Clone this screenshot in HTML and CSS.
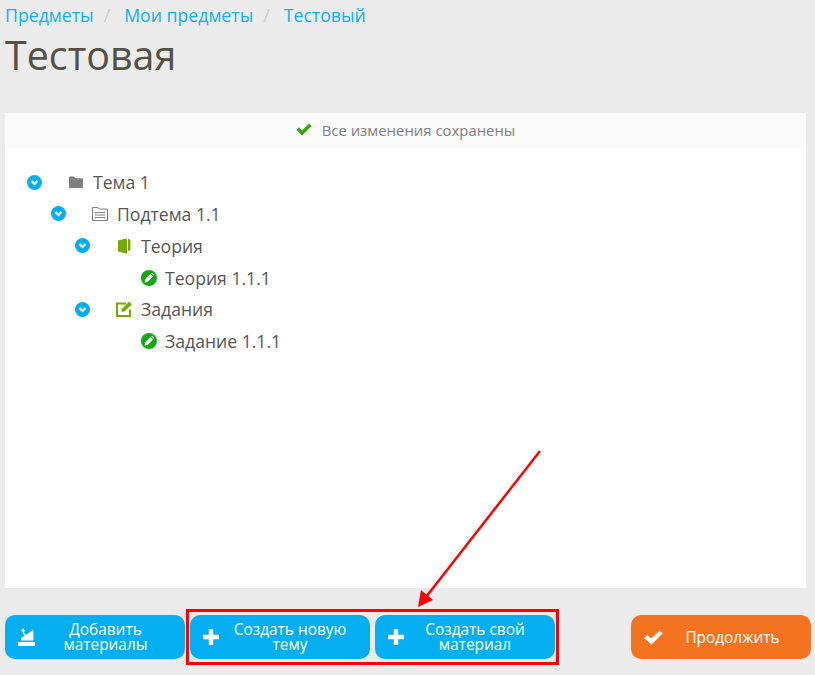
FILE: index.html
```html
<!DOCTYPE html>
<html lang="en">
<head>
    <meta charset="UTF-8">
    <meta name="viewport" content="width=device-width, initial-scale=1.0">
    <title>Тестовая</title>
    <link rel="stylesheet" href="styles.css">
</head>
<body>

<div class="page">
    <div class="breadcrumb">
        <a href="#">Предметы</a>
        <span class="sep">/</span>
        <a href="#">Мои предметы</a>
        <span class="sep">/</span>
        <a href="#">Тестовый</a>
    </div>
    <h1>Тестовая</h1>

    <div class="panel">
        <div class="status">
            <svg class="status-icon" viewBox="0 0 16 13"><path d="M0.5 7 L3 4.6 L6 7.6 L13 0.6 L15.6 3 L6 12.6 Z" fill="#3aa30c"/></svg>
            <span>Все изменения сохранены</span>
        </div>
        <div class="tree">
            <div class="row level-0">
                <span class="toggle"><svg viewBox="0 0 14 14"><path d="M4.2 5.6 L7 8.4 L9.8 5.6" /></svg></span>
                <svg class="icon" viewBox="0 0 16 16"><path d="M1 3.5 Q1 2.5 2 2.5 H6 L7.5 4.2 H14 Q15 4.2 15 5.2 V13 Q15 14 14 14 H2 Q1 14 1 13 Z" fill="#7f7f7f"/></svg>
                <span class="label">Тема 1</span>
            </div>
            <div class="row level-1">
                <span class="toggle"><svg viewBox="0 0 14 14"><path d="M4.2 5.6 L7 8.4 L9.8 5.6" /></svg></span>
                <svg class="icon icon-sub" viewBox="0 0 16 16"><path d="M0.5 1.5 H6 L7.5 3.1 H15.5 V14.5 H0.5 Z" fill="none" stroke="#7f7f7f" stroke-width="1"/><path d="M3 6 H13 V7 H3 Z M3 8.5 H13 V9.5 H3 Z M3 11 H13 V12 H3 Z" fill="#7f7f7f"/></svg>
                <span class="label">Подтема 1.1</span>
            </div>
            <div class="row level-2">
                <span class="toggle"><svg viewBox="0 0 14 14"><path d="M4.2 5.6 L7 8.4 L9.8 5.6" /></svg></span>
                <svg class="icon" viewBox="0 0 16 16"><path d="M2 2.6 L10 0.4 L11 1.4 V15.8 L2 13.6 Z M12 0.8 L14.4 1.8 V12.2 L12 13 Z" fill="#78a803"/></svg>
                <span class="label">Теория</span>
            </div>
            <div class="row level-3">
                <span class="slot"></span>
                <svg class="icon" viewBox="0 0 16 16"><circle cx="8" cy="8" r="8" fill="#12a812"/><path d="M3.6 12.4 L4.2 9.2 L9.4 4 L12 6.6 L6.8 11.8 Z M10.2 3.2 L11.2 2.8 L13.2 4.8 L12.8 5.8 Z" fill="#fff"/></svg>
                <span class="label">Теория 1.1.1</span>
            </div>
            <div class="row level-2">
                <span class="toggle"><svg viewBox="0 0 14 14"><path d="M4.2 5.6 L7 8.4 L9.8 5.6" /></svg></span>
                <svg class="icon" viewBox="0 0 16 16"><path d="M14 8.5 V15 H1 V2.6 H10" fill="none" stroke="#78a803" stroke-width="2"/><path d="M5.5 11 L6 8 L13 0.6 L16 3.2 L8.4 10.4 Z" fill="#78a803"/></svg>
                <span class="label">Задания</span>
            </div>
            <div class="row level-3">
                <span class="slot"></span>
                <svg class="icon" viewBox="0 0 16 16"><circle cx="8" cy="8" r="8" fill="#12a812"/><path d="M3.6 12.4 L4.2 9.2 L9.4 4 L12 6.6 L6.8 11.8 Z M10.2 3.2 L11.2 2.8 L13.2 4.8 L12.8 5.8 Z" fill="#fff"/></svg>
                <span class="label">Задание 1.1.1</span>
            </div>
        </div>
    </div>

    <div class="footer">
        <button class="btn">
            <svg class="btn-add" viewBox="0 0 17 19"><path d="M0 14 H17 V18 H0 Z" fill="#fff"/><path d="M3 12.6 L3.6 9.6 L6.6 7.8 L9.4 6 L14.6 2 L15.4 3 V12.6 Z" fill="#fff"/><path d="M3 2 L5.4 0.4 L7 3 L5 4.4 Z M5.4 4 L8 7 L7 8 L4.6 5 Z" fill="#fff"/></svg>
            <span>Добавить материалы</span>
        </button>
        <div class="highlight">
            <button class="btn">
                <svg class="btn-icon" viewBox="0 0 16 16"><path d="M5.8 0 H10.2 V5.8 H16 V10.2 H10.2 V16 H5.8 V10.2 H0 V5.8 H5.8 Z" fill="#fff"/></svg>
                <span>Создать новую тему</span>
            </button>
            <button class="btn">
                <svg class="btn-icon" viewBox="0 0 16 16"><path d="M5.8 0 H10.2 V5.8 H16 V10.2 H10.2 V16 H5.8 V10.2 H0 V5.8 H5.8 Z" fill="#fff"/></svg>
                <span>Создать свой материал</span>
            </button>
        </div>
        <button class="btn btn-next">
            <svg class="btn-check" viewBox="0 0 18 14"><path d="M0.2 7.5 L3.2 4.6 L7 8 L14.8 0.4 L17.8 3.2 L7 13.6 Z" fill="#fff"/></svg>
            <span>Продолжить</span>
        </button>
    </div>
</div>

<!-- annotation arrow drawn over the screenshot -->
<svg class="arrow" viewBox="0 0 815 675">
    <line x1="540" y1="451" x2="426" y2="597" stroke="#ff0000" stroke-width="2.5"/>
    <path d="M418 607 L421 590 L433 600 Z" fill="#ff0000"/>
</svg>

</body>
</html>
```

FILE: styles.css
```css
html, body {
    margin: 0;
    height: 100%;
}
body {
    font-family: "Open Sans", sans-serif;
    background-color: #ebebeb;
    color: #555555;
    overflow: hidden;
}
.page {
    padding: 0 4px 0 5px;
}
.breadcrumb {
    display: flex;
    gap: 11px;
    font-size: 17.7px;
    line-height: 24px;
    padding-top: 3px;
}
.breadcrumb a {
    color: #0db1f5;
    text-decoration: none;
}
.sep {
    color: #cccccc;
    margin: 0 3px 0 -1px;
}
h1 {
    font-size: 39.4px;
    font-weight: 400;
    line-height: 52px;
    margin: 2px 0 32px;
    color: #555046;
}
.panel {
    width: 801px;
    height: 475px;
    background-color: white;
}
.status {
    height: 35px;
    padding-bottom: 2px;
    box-sizing: border-box;
    background-color: #fafafa;
    display: flex;
    align-items: center;
    justify-content: center;
    gap: 10px;
    font-size: 14.9px;
    color: #808080;
}
.status-icon {
    width: 16px;
    height: 13px;
}
.tree {
    padding-top: 18.3px;
}
.row {
    display: flex;
    align-items: center;
    height: 31.8px;
    font-size: 17.6px;
}
.level-0 { padding-left: 22px; }
.level-1 { padding-left: 46px; }
.level-2 { padding-left: 70px; }
.level-3 { padding-left: 94px; }
.toggle, .slot {
    width: 15px;
    height: 15px;
    margin-right: 26px;
}
.toggle {
    border-radius: 50%;
    background-color: #04aef1;
}
.toggle svg {
    display: block;
    fill: none;
    stroke: white;
    stroke-width: 2;
}
.icon {
    width: 16px;
    height: 16px;
    margin-right: 9px;
}
.level-3 .icon {
    margin: 0 8px 0 1px;
}
.footer {
    display: flex;
    align-items: center;
    margin-top: 21px;
}
.btn {
    width: 180px;
    height: 44px;
    border: none;
    border-radius: 10px;
    background-color: #04aef1;
    color: white;
    font-family: inherit;
    font-size: 15.4px;
    line-height: 15px;
    display: flex;
    align-items: center;
    padding: 0 13px;
    cursor: pointer;
}
.btn span {
    flex: 1;
    text-align: center;
    padding: 0 7px 0 11px;
}
.btn-icon {
    width: 16px;
    height: 16px;
    flex: none;
}
.btn-add {
    width: 17px;
    height: 19px;
    flex: none;
}
.btn-check {
    width: 19px;
    height: 15px;
    flex: none;
}
.highlight {
    display: flex;
    gap: 5px;
    border: 3px solid #ff0000;
    padding: 3px 1px;
    margin-left: 1px;
}
.btn-next {
    background-color: #f47321;
    margin-left: 72px;
}
.arrow {
    position: absolute;
    left: 0;
    top: 0;
    width: 815px;
    height: 675px;
    pointer-events: none;
}
```
